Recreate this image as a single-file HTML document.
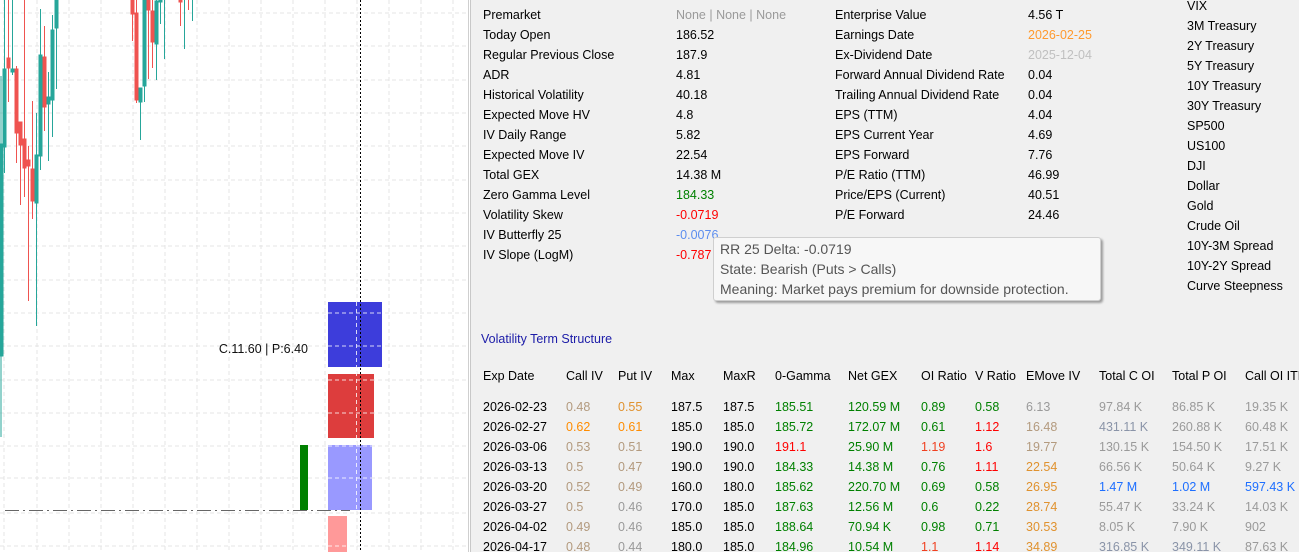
<!DOCTYPE html>
<html><head><meta charset="utf-8"><style>
*{margin:0;padding:0;box-sizing:border-box}
body{width:1299px;height:552px;overflow:hidden;background:#fff;font-family:"Liberation Sans",sans-serif;position:relative}
#chart{position:absolute;left:0;top:0;width:470px;height:552px;background:#fff}
#panel{position:absolute;left:470px;top:0;width:829px;height:552px;background:#f0f0f0;border-left:1px solid #c8c8c8;font-size:12.5px;color:#000}
.t{position:absolute;white-space:nowrap;line-height:16px;transform:translateY(-7px)}
.g{color:#9a9a9a}.tan{color:#b39a7e}.or{color:#ff8c00}.gr{color:#008000}.rd{color:#ff0000}.bl{color:#1e6fff}.gb{color:#8a94a8}.em{color:#e0922f}
#tip{position:absolute;left:713px;top:237px;width:388px;height:64px;background:#f7f7f7;border:1px solid #cfcfcf;border-radius:3px;box-shadow:2px 2px 2px rgba(0,0,0,.35);font-size:14px;color:#555;padding:1px 6px;line-height:20px}
</style></head><body>
<div id="chart">
<svg width="470" height="552" xmlns="http://www.w3.org/2000/svg">
<g stroke="#e4e4e4" stroke-dasharray="4,3" stroke-width="1">
<line x1="4" y1="0" x2="4" y2="552"/><line x1="37" y1="0" x2="37" y2="552"/><line x1="69" y1="0" x2="69" y2="552"/><line x1="101" y1="0" x2="101" y2="552"/><line x1="133" y1="0" x2="133" y2="552"/><line x1="165" y1="0" x2="165" y2="552"/><line x1="197" y1="0" x2="197" y2="552"/><line x1="229" y1="0" x2="229" y2="552"/><line x1="261" y1="0" x2="261" y2="552"/><line x1="293" y1="0" x2="293" y2="552"/><line x1="325" y1="0" x2="325" y2="552"/><line x1="357" y1="0" x2="357" y2="552"/><line x1="389" y1="0" x2="389" y2="552"/><line x1="421" y1="0" x2="421" y2="552"/><line x1="453" y1="0" x2="453" y2="552"/>
<line x1="0" y1="13" x2="468" y2="13"/><line x1="0" y1="46" x2="468" y2="46"/><line x1="0" y1="80" x2="468" y2="80"/><line x1="0" y1="113" x2="468" y2="113"/><line x1="0" y1="146" x2="468" y2="146"/><line x1="0" y1="180" x2="468" y2="180"/><line x1="0" y1="213" x2="468" y2="213"/><line x1="0" y1="246" x2="468" y2="246"/><line x1="0" y1="280" x2="468" y2="280"/><line x1="0" y1="313" x2="468" y2="313"/><line x1="0" y1="346" x2="468" y2="346"/><line x1="0" y1="380" x2="468" y2="380"/><line x1="0" y1="413" x2="468" y2="413"/><line x1="0" y1="446" x2="468" y2="446"/><line x1="0" y1="478" x2="468" y2="478"/><line x1="0" y1="513" x2="468" y2="513"/><line x1="0" y1="546" x2="468" y2="546"/>
</g>
<g stroke-width="1">
<g stroke="#26a69a" fill="#26a69a">
<line x1="1" y1="76" x2="1" y2="437"/><rect x="0" y="144" width="3" height="212"/>
<line x1="4.5" y1="0" x2="4.5" y2="173"/><rect x="3" y="69" width="3" height="78"/>
<line x1="12.5" y1="0" x2="12.5" y2="75"/><rect x="11" y="69" width="3" height="3"/>
<line x1="36.5" y1="113" x2="36.5" y2="326"/><rect x="35" y="155" width="3" height="48"/>
<line x1="40.5" y1="9" x2="40.5" y2="170"/><rect x="39" y="55" width="3" height="101"/>
<line x1="48.5" y1="72" x2="48.5" y2="161"/><rect x="47" y="97" width="3" height="7"/>
<line x1="52.5" y1="15" x2="52.5" y2="137"/><rect x="51" y="30" width="3" height="70"/>
<line x1="56.5" y1="0" x2="56.5" y2="89"/><rect x="55" y="0" width="3" height="28"/>
<line x1="140.5" y1="88" x2="140.5" y2="140"/><rect x="139" y="88" width="3" height="14"/>
<line x1="144.5" y1="0" x2="144.5" y2="102"/><rect x="143" y="0" width="3" height="86"/>
<line x1="156.5" y1="0" x2="156.5" y2="80"/><rect x="155" y="1" width="3" height="43"/>
<line x1="160.5" y1="0" x2="160.5" y2="24"/><rect x="159" y="0" width="3" height="2"/>
<line x1="164.5" y1="0" x2="164.5" y2="59"/>
<line x1="184.5" y1="0" x2="184.5" y2="49"/>
<line x1="192.5" y1="0" x2="192.5" y2="21"/>
</g>
<g stroke="#ef5350" fill="#ef5350">
<line x1="8.5" y1="0" x2="8.5" y2="102"/><rect x="7" y="58" width="3" height="10"/>
<line x1="16.5" y1="66" x2="16.5" y2="163"/><rect x="15" y="69" width="3" height="64"/>
<line x1="20.5" y1="122" x2="20.5" y2="205"/><rect x="19" y="122" width="3" height="23"/>
<line x1="24.5" y1="0" x2="24.5" y2="197"/><rect x="23" y="139" width="3" height="29"/>
<line x1="28.5" y1="146" x2="28.5" y2="301"/><rect x="27" y="160" width="3" height="6"/>
<line x1="32.5" y1="101" x2="32.5" y2="219"/><rect x="31" y="169" width="3" height="32"/>
<line x1="44.5" y1="26" x2="44.5" y2="131"/><rect x="43" y="57" width="3" height="50"/>
<line x1="132.5" y1="0" x2="132.5" y2="41"/><rect x="131" y="0" width="3" height="14"/>
<line x1="136.5" y1="0" x2="136.5" y2="103"/><rect x="135" y="13" width="3" height="87"/>
<line x1="148.5" y1="0" x2="148.5" y2="79"/><rect x="147" y="0" width="3" height="10"/>
<line x1="152.5" y1="0" x2="152.5" y2="68"/><rect x="151" y="11" width="3" height="31"/>
<line x1="180.5" y1="0" x2="180.5" y2="26"/><rect x="179" y="0" width="3" height="2"/>
<line x1="188.5" y1="0" x2="188.5" y2="10"/>
</g>
</g>
<rect x="328" y="302" width="54" height="65" fill="#3d3ddb"/>
<rect x="328" y="374" width="46" height="64" fill="#dd3d3d"/>
<rect x="328" y="445" width="44" height="65" fill="#9999ff"/>
<rect x="328" y="516" width="19" height="36" fill="#ff9999"/>
<rect x="300" y="445" width="8" height="65" fill="#008000"/>
<g stroke="#fff" stroke-dasharray="4,3" stroke-width="1" opacity=".8">
<line x1="328" y1="313" x2="382" y2="313"/><line x1="328" y1="346" x2="382" y2="346"/>
<line x1="328" y1="380" x2="374" y2="380"/><line x1="328" y1="413" x2="374" y2="413"/>
<line x1="328" y1="446" x2="372" y2="446"/><line x1="328" y1="478" x2="372" y2="478"/>
<line x1="328" y1="546" x2="347" y2="546"/>
<line x1="356.5" y1="302" x2="356.5" y2="510"/>
</g>
<line x1="5" y1="510.5" x2="350" y2="510.5" stroke="#666" stroke-dasharray="14,4,2,4" stroke-width="1"/>
<line x1="360.5" y1="0" x2="360.5" y2="552" stroke="#000" stroke-dasharray="2,2" stroke-width="1"/>
<line x1="468.5" y1="0" x2="468.5" y2="552" stroke="#cfcfcf"/>
<text x="308" y="353" text-anchor="end" font-family="Liberation Sans" font-size="12.5" fill="#111">C.11.60 | P:6.40</text>
</svg>
</div>
<div id="panel"></div>
<div style="position:absolute;left:0;top:0;font-size:12.5px">
<div class="t" style="left:483px;top:14px">Premarket</div><div class="t g" style="left:676px;top:14px">None | None | None</div>
<div class="t" style="left:483px;top:34px">Today Open</div><div class="t" style="left:676px;top:34px">186.52</div>
<div class="t" style="left:483px;top:54px">Regular Previous Close</div><div class="t" style="left:676px;top:54px">187.9</div>
<div class="t" style="left:483px;top:74px">ADR</div><div class="t" style="left:676px;top:74px">4.81</div>
<div class="t" style="left:483px;top:94px">Historical Volatility</div><div class="t" style="left:676px;top:94px">40.18</div>
<div class="t" style="left:483px;top:114px">Expected Move HV</div><div class="t" style="left:676px;top:114px">4.8</div>
<div class="t" style="left:483px;top:134px">IV Daily Range</div><div class="t" style="left:676px;top:134px">5.82</div>
<div class="t" style="left:483px;top:154px">Expected Move IV</div><div class="t" style="left:676px;top:154px">22.54</div>
<div class="t" style="left:483px;top:174px">Total GEX</div><div class="t" style="left:676px;top:174px">14.38 M</div>
<div class="t" style="left:483px;top:194px">Zero Gamma Level</div><div class="t gr" style="left:676px;top:194px">184.33</div>
<div class="t" style="left:483px;top:214px">Volatility Skew</div><div class="t rd" style="left:676px;top:214px">-0.0719</div>
<div class="t" style="left:483px;top:234px">IV Butterfly 25</div><div class="t" style="left:676px;top:234px;color:#5b8def">-0.0076</div>
<div class="t" style="left:483px;top:254px">IV Slope (LogM)</div><div class="t rd" style="left:676px;top:254px">-0.787</div>

<div class="t" style="left:835px;top:14px">Enterprise Value</div><div class="t" style="left:1028px;top:14px">4.56 T</div>
<div class="t" style="left:835px;top:34px">Earnings Date</div><div class="t" style="left:1028px;top:34px;color:#ff9a2e">2026-02-25</div>
<div class="t" style="left:835px;top:54px">Ex-Dividend Date</div><div class="t" style="left:1028px;top:54px;color:#c0c0c0">2025-12-04</div>
<div class="t" style="left:835px;top:74px">Forward Annual Dividend Rate</div><div class="t" style="left:1028px;top:74px">0.04</div>
<div class="t" style="left:835px;top:94px">Trailing Annual Dividend Rate</div><div class="t" style="left:1028px;top:94px">0.04</div>
<div class="t" style="left:835px;top:114px">EPS (TTM)</div><div class="t" style="left:1028px;top:114px">4.04</div>
<div class="t" style="left:835px;top:134px">EPS Current Year</div><div class="t" style="left:1028px;top:134px">4.69</div>
<div class="t" style="left:835px;top:154px">EPS Forward</div><div class="t" style="left:1028px;top:154px">7.76</div>
<div class="t" style="left:835px;top:174px">P/E Ratio (TTM)</div><div class="t" style="left:1028px;top:174px">46.99</div>
<div class="t" style="left:835px;top:194px">Price/EPS (Current)</div><div class="t" style="left:1028px;top:194px">40.51</div>
<div class="t" style="left:835px;top:214px">P/E Forward</div><div class="t" style="left:1028px;top:214px">24.46</div>

<div class="t" style="left:1187px;top:5px">VIX</div>
<div class="t" style="left:1187px;top:25px">3M Treasury</div>
<div class="t" style="left:1187px;top:45px">2Y Treasury</div>
<div class="t" style="left:1187px;top:65px">5Y Treasury</div>
<div class="t" style="left:1187px;top:85px">10Y Treasury</div>
<div class="t" style="left:1187px;top:105px">30Y Treasury</div>
<div class="t" style="left:1187px;top:125px">SP500</div>
<div class="t" style="left:1187px;top:145px">US100</div>
<div class="t" style="left:1187px;top:165px">DJI</div>
<div class="t" style="left:1187px;top:185px">Dollar</div>
<div class="t" style="left:1187px;top:205px">Gold</div>
<div class="t" style="left:1187px;top:225px">Crude Oil</div>
<div class="t" style="left:1187px;top:245px">10Y-3M Spread</div>
<div class="t" style="left:1187px;top:265px">10Y-2Y Spread</div>
<div class="t" style="left:1187px;top:285px">Curve Steepness</div>

<div class="t" style="left:481px;top:338px;color:#1c1ca8">Volatility Term Structure</div>

<div class="t" style="left:483px;top:375px">Exp Date</div><div class="t" style="left:566px;top:375px">Call IV</div><div class="t" style="left:618px;top:375px">Put IV</div><div class="t" style="left:671px;top:375px">Max</div><div class="t" style="left:723px;top:375px">MaxR</div><div class="t" style="left:775px;top:375px">0-Gamma</div><div class="t" style="left:848px;top:375px">Net GEX</div><div class="t" style="left:921px;top:375px">OI Ratio</div><div class="t" style="left:975px;top:375px">V Ratio</div><div class="t" style="left:1026px;top:375px">EMove IV</div><div class="t" style="left:1099px;top:375px">Total C OI</div><div class="t" style="left:1172px;top:375px">Total P OI</div><div class="t" style="left:1245px;top:375px">Call OI ITM</div>

<div class="t" style="left:483px;top:406px">2026-02-23</div><div class="t tan" style="left:566px;top:406px">0.48</div><div class="t em" style="left:618px;top:406px">0.55</div><div class="t" style="left:671px;top:406px">187.5</div><div class="t" style="left:723px;top:406px">187.5</div><div class="t gr" style="left:775px;top:406px">185.51</div><div class="t gr" style="left:848px;top:406px">120.59 M</div><div class="t gr" style="left:921px;top:406px">0.89</div><div class="t gr" style="left:975px;top:406px">0.58</div><div class="t g" style="left:1026px;top:406px">6.13</div><div class="t g" style="left:1099px;top:406px">97.84 K</div><div class="t g" style="left:1172px;top:406px">86.85 K</div><div class="t g" style="left:1245px;top:406px">19.35 K</div>

<div class="t" style="left:483px;top:426px">2026-02-27</div><div class="t or" style="left:566px;top:426px">0.62</div><div class="t or" style="left:618px;top:426px">0.61</div><div class="t" style="left:671px;top:426px">185.0</div><div class="t" style="left:723px;top:426px">185.0</div><div class="t gr" style="left:775px;top:426px">185.72</div><div class="t gr" style="left:848px;top:426px">172.07 M</div><div class="t gr" style="left:921px;top:426px">0.61</div><div class="t rd" style="left:975px;top:426px">1.12</div><div class="t tan" style="left:1026px;top:426px">16.48</div><div class="t gb" style="left:1099px;top:426px">431.11 K</div><div class="t g" style="left:1172px;top:426px">260.88 K</div><div class="t g" style="left:1245px;top:426px">60.48 K</div>

<div class="t" style="left:483px;top:446px">2026-03-06</div><div class="t tan" style="left:566px;top:446px">0.53</div><div class="t tan" style="left:618px;top:446px">0.51</div><div class="t" style="left:671px;top:446px">190.0</div><div class="t" style="left:723px;top:446px">190.0</div><div class="t rd" style="left:775px;top:446px">191.1</div><div class="t gr" style="left:848px;top:446px">25.90 M</div><div class="t rd" style="left:921px;top:446px;color:#f04020">1.19</div><div class="t rd" style="left:975px;top:446px">1.6</div><div class="t tan" style="left:1026px;top:446px">19.77</div><div class="t g" style="left:1099px;top:446px">130.15 K</div><div class="t g" style="left:1172px;top:446px">154.50 K</div><div class="t g" style="left:1245px;top:446px">17.51 K</div>

<div class="t" style="left:483px;top:466px">2026-03-13</div><div class="t tan" style="left:566px;top:466px">0.5</div><div class="t tan" style="left:618px;top:466px">0.47</div><div class="t" style="left:671px;top:466px">190.0</div><div class="t" style="left:723px;top:466px">190.0</div><div class="t gr" style="left:775px;top:466px">184.33</div><div class="t gr" style="left:848px;top:466px">14.38 M</div><div class="t gr" style="left:921px;top:466px">0.76</div><div class="t rd" style="left:975px;top:466px">1.11</div><div class="t em" style="left:1026px;top:466px">22.54</div><div class="t g" style="left:1099px;top:466px">66.56 K</div><div class="t g" style="left:1172px;top:466px">50.64 K</div><div class="t g" style="left:1245px;top:466px">9.27 K</div>

<div class="t" style="left:483px;top:486px">2026-03-20</div><div class="t tan" style="left:566px;top:486px">0.52</div><div class="t tan" style="left:618px;top:486px">0.49</div><div class="t" style="left:671px;top:486px">160.0</div><div class="t" style="left:723px;top:486px">180.0</div><div class="t gr" style="left:775px;top:486px">185.62</div><div class="t gr" style="left:848px;top:486px">220.70 M</div><div class="t gr" style="left:921px;top:486px">0.69</div><div class="t gr" style="left:975px;top:486px">0.58</div><div class="t em" style="left:1026px;top:486px">26.95</div><div class="t bl" style="left:1099px;top:486px">1.47 M</div><div class="t bl" style="left:1172px;top:486px">1.02 M</div><div class="t bl" style="left:1245px;top:486px">597.43 K</div>

<div class="t" style="left:483px;top:506px">2026-03-27</div><div class="t tan" style="left:566px;top:506px">0.5</div><div class="t g" style="left:618px;top:506px">0.46</div><div class="t" style="left:671px;top:506px">170.0</div><div class="t" style="left:723px;top:506px">185.0</div><div class="t gr" style="left:775px;top:506px">187.63</div><div class="t gr" style="left:848px;top:506px">12.56 M</div><div class="t gr" style="left:921px;top:506px">0.6</div><div class="t gr" style="left:975px;top:506px">0.22</div><div class="t em" style="left:1026px;top:506px">28.74</div><div class="t g" style="left:1099px;top:506px">55.47 K</div><div class="t g" style="left:1172px;top:506px">33.24 K</div><div class="t g" style="left:1245px;top:506px">14.03 K</div>

<div class="t" style="left:483px;top:526px">2026-04-02</div><div class="t tan" style="left:566px;top:526px">0.49</div><div class="t g" style="left:618px;top:526px">0.46</div><div class="t" style="left:671px;top:526px">185.0</div><div class="t" style="left:723px;top:526px">185.0</div><div class="t gr" style="left:775px;top:526px">188.64</div><div class="t gr" style="left:848px;top:526px">70.94 K</div><div class="t gr" style="left:921px;top:526px">0.98</div><div class="t gr" style="left:975px;top:526px">0.71</div><div class="t em" style="left:1026px;top:526px">30.53</div><div class="t g" style="left:1099px;top:526px">8.05 K</div><div class="t g" style="left:1172px;top:526px">7.90 K</div><div class="t g" style="left:1245px;top:526px">902</div>

<div class="t" style="left:483px;top:546px">2026-04-17</div><div class="t tan" style="left:566px;top:546px">0.48</div><div class="t g" style="left:618px;top:546px">0.44</div><div class="t" style="left:671px;top:546px">180.0</div><div class="t" style="left:723px;top:546px">185.0</div><div class="t gr" style="left:775px;top:546px">184.96</div><div class="t gr" style="left:848px;top:546px">10.54 M</div><div class="t" style="left:921px;top:546px;color:#f04020">1.1</div><div class="t rd" style="left:975px;top:546px">1.14</div><div class="t em" style="left:1026px;top:546px">34.89</div><div class="t gb" style="left:1099px;top:546px">316.85 K</div><div class="t gb" style="left:1172px;top:546px">349.11 K</div><div class="t g" style="left:1245px;top:546px">87.63 K</div>
</div>
<div id="tip">RR 25 Delta: -0.0719<br>State: Bearish (Puts &gt; Calls)<br>Meaning: Market pays premium for downside protection.</div>
</body></html>
